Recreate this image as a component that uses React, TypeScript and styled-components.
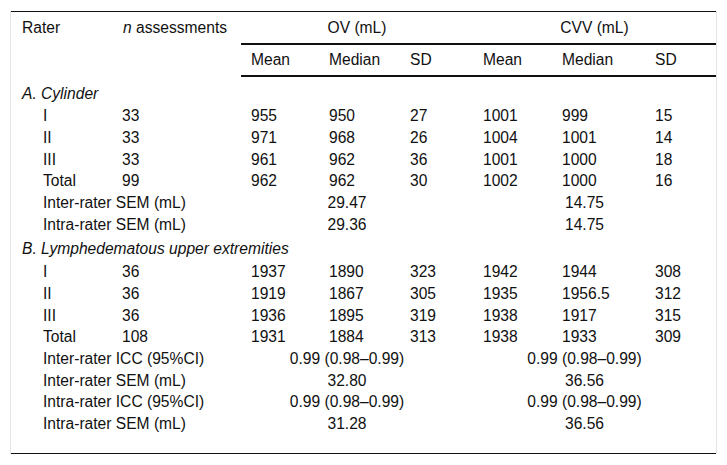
import React from 'react';
import styled, { createGlobalStyle } from 'styled-components';

type DataRow = [string, string, string, string, string, string, string, string];
type StatRow = [string, string, string];

const cylinderRows: DataRow[] = [
  ['I', '33', '955', '950', '27', '1001', '999', '15'],
  ['II', '33', '971', '968', '26', '1004', '1001', '14'],
  ['III', '33', '961', '962', '36', '1001', '1000', '18'],
  ['Total', '99', '962', '962', '30', '1002', '1000', '16'],
];

const cylinderStats: StatRow[] = [
  ['Inter-rater SEM (mL)', '29.47', '14.75'],
  ['Intra-rater SEM (mL)', '29.36', '14.75'],
];

const limbRows: DataRow[] = [
  ['I', '36', '1937', '1890', '323', '1942', '1944', '308'],
  ['II', '36', '1919', '1867', '305', '1935', '1956.5', '312'],
  ['III', '36', '1936', '1895', '319', '1938', '1917', '315'],
  ['Total', '108', '1931', '1884', '313', '1938', '1933', '309'],
];

const limbStats: StatRow[] = [
  ['Inter-rater ICC (95%CI)', '0.99 (0.98–0.99)', '0.99 (0.98–0.99)'],
  ['Inter-rater SEM (mL)', '32.80', '36.56'],
  ['Intra-rater ICC (95%CI)', '0.99 (0.98–0.99)', '0.99 (0.98–0.99)'],
  ['Intra-rater SEM (mL)', '31.28', '36.56'],
];

const columnWidths = [101, 129, 78, 81, 73, 79, 93, 71];

export default function App() {
  return (
    <>
      <GlobalStyle />
      <Frame>
        <Table>
          <colgroup>
            {columnWidths.map((w, i) => (
              <col key={i} style={{ width: w }} />
            ))}
          </colgroup>
          <thead>
            <HeadRow>
              <HeadCell>Rater</HeadCell>
              <HeadCell>
                <em>n</em> assessments
              </HeadCell>
              <GroupCell colSpan={3}>OV (mL)</GroupCell>
              <GroupCell colSpan={3}>CVV (mL)</GroupCell>
            </HeadRow>
            <HeadRow>
              <HeadCell />
              <HeadCell />
              <SubHeadCell>Mean</SubHeadCell>
              <SubHeadCell>Median</SubHeadCell>
              <SubHeadCell>SD</SubHeadCell>
              <SubHeadCell>Mean</SubHeadCell>
              <SubHeadCell>Median</SubHeadCell>
              <SubHeadCell>SD</SubHeadCell>
            </HeadRow>
          </thead>
          <tbody>
            <Section title="A. Cylinder" rows={cylinderRows} stats={cylinderStats} first />
            <Section title="B. Lymphedematous upper extremities" rows={limbRows} stats={limbStats} last />
          </tbody>
        </Table>
      </Frame>
    </>
  );
}

interface SectionProps {
  title: string;
  rows: DataRow[];
  stats: StatRow[];
  first?: boolean;
  last?: boolean;
}

const Section = ({ title, rows, stats, first, last }: SectionProps) => {
  return (
    <>
      <tr>
        <SectionCell colSpan={8} $first={first}>
          {title}
        </SectionCell>
      </tr>
      {rows.map((row) => (
        <tr key={row[0]}>
          {row.map((value, i) => (
            <Cell key={i} $indent={i === 0}>
              {value}
            </Cell>
          ))}
        </tr>
      ))}
      {stats.map(([label, ov, cvv], i) => {
        const isLast = !!last && i === stats.length - 1;
        return (
          <tr key={label}>
            <Cell colSpan={2} $indent $last={isLast}>
              {label}
            </Cell>
            <SpanCell colSpan={3} $last={isLast}>
              {ov}
            </SpanCell>
            <SpanCell colSpan={3} $last={isLast}>
              {cvv}
            </SpanCell>
          </tr>
        );
      })}
    </>
  );
};

const GlobalStyle = createGlobalStyle`
  body {
    margin: 11px 0 0 10px;
    background: #ffffff;
    color: #111111;
    font-family: "Liberation Sans", Arial, sans-serif;
  }
`;

const Frame = styled.div`
  width: 705px;
  border-left: 1px solid #e4e4e4;
  border-right: 1px solid #e4e4e4;
`;

const Table = styled.table`
  width: 100%;
  table-layout: fixed;
  border-collapse: collapse;
  border-top: 1px solid #111;
  border-bottom: 1px solid #111;
  font-size: 15.6px;

  em {
    font-style: italic;
  }
`;

const HeadRow = styled.tr`
  height: 32px;
`;

const HeadCell = styled.th`
  padding: 1px 0 0 11px;
  font-weight: normal;
  text-align: left;
  vertical-align: middle;
  white-space: nowrap;
`;

const GroupCell = styled.th`
  padding: 1px 0 0 0;
  font-weight: normal;
  text-align: center;
  vertical-align: middle;
  border-bottom: 2px solid #111;
`;

const SubHeadCell = styled.th`
  padding: 0 0 0 10px;
  font-weight: normal;
  text-align: left;
  vertical-align: middle;
  border-bottom: 2px solid #111;
`;

const SectionCell = styled.td<{ $first?: boolean }>`
  padding: ${(p) => (p.$first ? '8px' : '5px')} 0 3px 11px;
  line-height: 17.7px;
  font-style: italic;
  text-align: left;
`;

const Cell = styled.td<{ $indent?: boolean; $last?: boolean }>`
  padding: 2px 0 ${(p) => (p.$last ? '20px' : '2px')} ${(p) => (p.$indent ? '32px' : '10px')};
  line-height: 17.7px;
  text-align: left;
  white-space: nowrap;
`;

const SpanCell = styled.td<{ $last?: boolean }>`
  padding: 2px 20px ${(p) => (p.$last ? '20px' : '2px')} 0;
  line-height: 17.7px;
  text-align: center;
  white-space: nowrap;
`;
